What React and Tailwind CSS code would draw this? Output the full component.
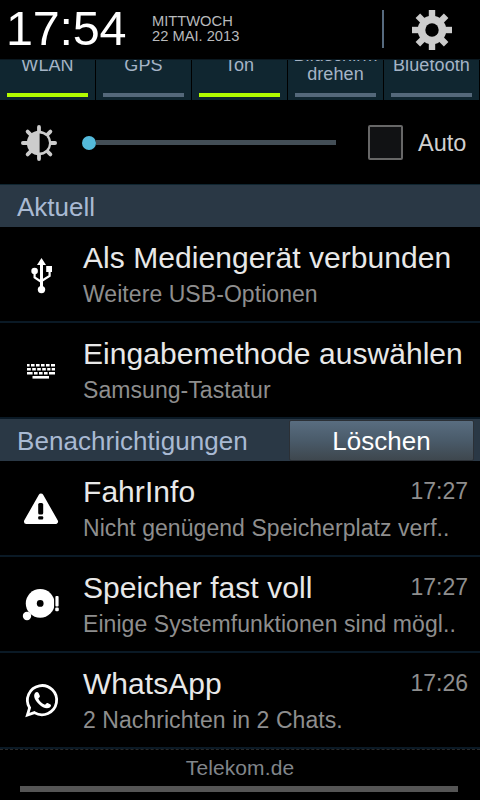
const TOGGLES = [
  { label: ['WLAN'], on: true },
  { label: ['GPS'], on: false },
  { label: ['Ton'], on: true },
  { label: ['Bildschirm', 'drehen'], on: false },
  { label: ['Bluetooth'], on: false },
]

function GearIcon() {
  return (
    <svg width="40" height="40" viewBox="0 0 40 40" className="text-[#cccccc]">
      {[0, 45, 90, 135].map((a) => (
        <rect key={a} x="16.8" y="0" width="6.4" height="40" fill="currentColor" transform={`rotate(${a} 20 20)`} />
      ))}
      <circle cx="20" cy="20" r="14.3" fill="currentColor" />
      <circle cx="20" cy="20" r="6.7" fill="#000" />
    </svg>
  )
}

function BrightnessIcon() {
  return (
    <svg width="36" height="36" viewBox="0 0 36 36" className="shrink-0 text-[#cccccc]">
      {[0, 45, 90, 135].map((a) => (
        <line key={a} x1="18" y1="1.9" x2="18" y2="34.1" stroke="currentColor" strokeWidth="3.8" strokeLinecap="round" transform={`rotate(${a} 18 18)`} />
      ))}
      <circle cx="18" cy="18" r="12.2" fill="currentColor" />
      <path d="M18.6 8.6A9.4 9.4 0 0 1 18.6 27.4Z" fill="#000" />
    </svg>
  )
}

function UsbIcon() {
  return (
    <svg width="40" height="40" viewBox="0 0 40 40" fill="#fff">
      <path d="M20.5 2L25 9H16Z" />
      <rect x="19" y="7" width="3" height="26" />
      <circle cx="20.5" cy="33.6" r="3.7" />
      <circle cx="13.6" cy="15" r="3.3" />
      <rect x="25.2" y="10" width="5.8" height="6" />
      <path d="M13.6 15V21.5L20.5 26M28.6 15V20L20.5 25" fill="none" stroke="#fff" strokeWidth="2.2" />
    </svg>
  )
}

function KeyboardIcon() {
  return (
    <svg width="40" height="40" viewBox="0 0 40 40" fill="none" stroke="#fff" strokeWidth="2.6">
      <path d="M6 13.2H34" strokeDasharray="2.6 1.4 3.6 1.4 3.6 1.4 3.6 1.4 3.6 1.4 4 9" />
      <path d="M6 17.2H34" strokeDasharray="3.8 1.4 3.6 1.4 3.6 1.4 3.6 1.4 3.2 1.3 3.3 9" />
      <path d="M6 21.2H34" strokeDasharray="5.6 1.4 3.6 1.4 3.6 1.4 3.6 1.4 6 9" />
      <path d="M11.5 25.3H28" />
    </svg>
  )
}

function WarningIcon() {
  return (
    <svg width="40" height="40" viewBox="0 0 40 40">
      <path d="M20 6L34.5 31.5H5.5Z" fill="#fff" stroke="#fff" strokeWidth="5" strokeLinejoin="round" />
      <rect x="17.2" y="13" width="5" height="11.5" rx="1.5" fill="#000" />
      <rect x="17.2" y="26.2" width="5" height="3.4" rx="1" fill="#000" />
    </svg>
  )
}

function StorageIcon() {
  return (
    <svg width="40" height="40" viewBox="0 0 40 40" fill="#fff">
      <circle cx="19.2" cy="17.4" r="14.4" />
      <circle cx="6" cy="30" r="4.2" />
      <circle cx="19.2" cy="17.4" r="3.4" fill="#000" />
      <path d="M35.8 8.5V26.5" stroke="#000" strokeWidth="5.4" strokeLinecap="round" />
      <rect x="34.4" y="10" width="3.2" height="10.6" rx="1" />
      <rect x="34.2" y="21.6" width="3.6" height="3.6" rx="1.2" />
    </svg>
  )
}

function WhatsAppIcon() {
  return (
    <svg width="40" height="40" viewBox="0 0 40 40">
      <path d="M8.6 25.8A14.6 14.6 0 1 1 13.4 30.6L6.4 33Z" fill="none" stroke="#fff" strokeWidth="2.8" strokeLinejoin="miter" />
      <path d="M14.2 10.8C15.4 9.6 17 9.9 17.7 11.2L18.9 14C19.1 15.1 17.7 16 17.3 16.6C18.3 19.4 21.2 22 24 22.7C24.9 22 25.5 20.6 26.6 21L29.5 22.4C30.5 23.2 29.9 24.6 28.8 25.4C26 27.2 21.7 25.9 18 22.2C14 18.4 11.7 13.8 14.2 10.8Z" fill="#fff" />
    </svg>
  )
}

function Toggle({ label, on }) {
  return (
    <div className="flex h-[40px] w-24 flex-col items-center overflow-hidden border-r border-black bg-[#102630]">
      <div className="flex h-[10px] shrink-0 items-center justify-center">
        <div className="text-center text-[18px] leading-[19px] tracking-[0.1px] text-[#a5b4c6]">
          {label.map((line) => (
            <div key={line}>{line}</div>
          ))}
        </div>
      </div>
      <div className={`mt-[23px] h-1 w-[81px] shrink-0 ${on ? 'bg-[#b2fb00]' : 'bg-[#54687a]'}`} />
    </div>
  )
}

function Row({ icon, title, text, time }) {
  return (
    <div className="flex h-24 border-b-2 border-[#0a1925]">
      <div className="flex w-[83px] shrink-0 pt-[29px] pl-[21px]">{icon}</div>
      <div className="flex-1 pt-[13px] whitespace-nowrap">
        <div className="flex justify-between">
          <div className="text-[30px] leading-[35px] tracking-[0.05px] text-[#e8e8e8]">{title}</div>
          {time && <div className="pr-3 text-[23px] leading-[35px] text-[#8e8e8e]">{time}</div>}
        </div>
        <div className="text-[23px] leading-[38px] tracking-[0.06px] text-[#8e8e8e]">{text}</div>
      </div>
    </div>
  )
}

export default function App() {
  return (
    <div className="flex h-[800px] w-[480px] flex-col overflow-hidden bg-black font-['Liberation_Sans',Arial,sans-serif]">
      <header className="flex h-[59px] shrink-0">
        <div className="w-[145px] pl-[6px] text-[48.5px] leading-[57px] tracking-[-0.2px] text-white">17:54</div>
        <div className="w-[237px] pt-[14px] pl-[7px] text-[14.7px] leading-[15px] text-[#b8babc]">
          <div>MITTWOCH</div>
          <div>22 MAI. 2013</div>
        </div>
        <div className="mt-[10px] h-[38px] w-[2px] bg-[#566a7e]" />
        <div className="pt-[10px] pl-7">
          <GearIcon />
        </div>
      </header>

      <div className="flex shrink-0 border-t border-[#0a1820]">
        {TOGGLES.map((t) => (
          <Toggle key={t.label[0]} {...t} />
        ))}
      </div>

      <div className="flex h-[84px] shrink-0 items-center pt-px pl-[21px]">
        <BrightnessIcon />
        <div className="ml-[25px] flex items-center">
          <div className="h-[14px] w-[14px] rounded-full bg-[#54badb]" />
          <div className="h-[5px] w-[240px] bg-[#434e56]" />
        </div>
        <div className="ml-8 h-[35px] w-[35px] rounded-[2px] border-2 border-[#676767] bg-[#111214]" />
        <div className="ml-[15px] text-[23.5px] leading-[30px] text-[#d0d0d0]">Auto</div>
      </div>

      <div className="h-[43px] shrink-0 border-t border-[#0f2530] bg-[#2a3845] pl-[17px] text-[26px] leading-[44px] text-[#a9bad3]">Aktuell</div>
      <Row icon={<UsbIcon />} title="Als Mediengerät verbunden" text="Weitere USB-Optionen" />
      <Row icon={<KeyboardIcon />} title="Eingabemethode auswählen" text="Samsung-Tastatur" />

      <div className="flex h-[42px] shrink-0 items-center justify-between bg-[#2a3845] pr-[6px] pl-[17px]">
        <div className="pt-px text-[26px] leading-[42px] tracking-[0.05px] text-[#a9bad3]">Benachrichtigungen</div>
        <button className="h-[41px] w-[185px] rounded-[2px] border border-[#2b3036] bg-linear-to-b from-[#596d80] via-[#4a5b6a] to-[#3e474e] pt-px text-[26px] leading-[39px] text-white">
          Löschen
        </button>
      </div>
      <Row icon={<WarningIcon />} title="FahrInfo" text="Nicht genügend Speicherplatz verf.." time="17:27" />
      <Row icon={<StorageIcon />} title="Speicher fast voll" text="Einige Systemfunktionen sind mögl.." time="17:27" />
      <Row icon={<WhatsAppIcon />} title="WhatsApp" text="2 Nachrichten in 2 Chats." time="17:26" />

      <footer className="flex h-[51px] shrink-0 flex-col items-center border-t border-dashed border-[#2a2a2a]">
        <div className="mt-[2px] text-[21px] leading-[32px] tracking-[0.1px] text-[#80858a]">Telekom.de</div>
        <div className="mt-[2px] mr-[2px] h-[6px] w-[438px] bg-[#555555]" />
      </footer>
    </div>
  )
}
